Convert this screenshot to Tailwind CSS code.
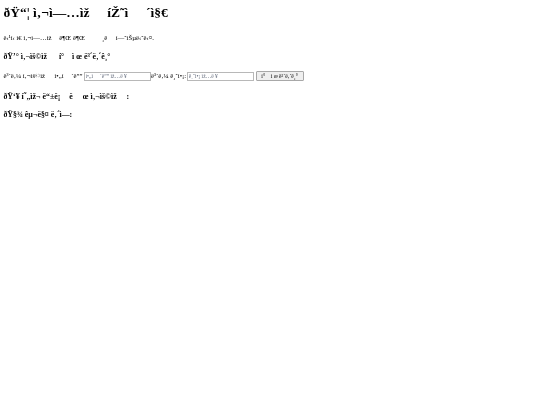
<!DOCTYPE html>
<html lang="en">
<head>
    <meta charset="UTF-8">
    <title>Business page</title>
    <script src="https://cdn.jsdelivr.net/npm/@tailwindcss/browser@4"></script>
</head>
<body class="bg-white text-black font-['Liberation_Serif',serif] px-[3.4px] h-[405px] overflow-hidden blur-[0.25px]">
    <h1 class="text-[13.5px] leading-[15.5px] font-bold mt-[5px] whitespace-pre">ðŸ“¦ ì‚¬ì—…ìž&#x90;  íŽ˜ì&#x9d;  ´ì§€</h1>

    <p class="text-[6.75px] leading-[8px] mt-[13.5px] whitespace-pre">ë‹¹ì‹ ì€ ì‚¬ì—…ìž&#x90; ê¶Œ ê¶Œ          ¸ê     ì—ˆìŠµë‹ˆë‹¤.</p>

    <!-- send money form -->
    <h3 class="text-[7.9px] leading-[9px] font-bold mt-[10px] whitespace-pre">ðŸ’° ì‚¬ìš©ìž&#x90;   í°    ì œ ë³´ë‚´ê¸°</h3>
    <form class="flex items-center text-[6.75px] leading-[8px] mt-[10px] h-[10px] whitespace-pre">
        <label>ë³´ë‚¼ ì‚¬ìš©ìž&#x90;  ì•„ì&#x9d; ´ë””</label>
        <input class="ml-[1px] w-[67px] h-[9px] border border-[#b8b8b8] px-[1px] text-[5.6px] placeholder:text-gray-500" placeholder="ì•„ì&#x9d;  ´ë”” ìž…ë ¥">
        <label class="ml-[0.5px]">ë³´ë‚¼ ê¸ˆì•¡:</label>
        <input class="ml-[0.5px] w-[67px] h-[9px] border border-[#b8b8b8] px-[1px] text-[5.6px] placeholder:text-gray-500" placeholder="ê¸ˆì•¡ ìž…ë ¥">
        <button type="button" class="ml-[2px] w-[48px] h-[10px] bg-[#efefef] border border-[#a8a8a8] rounded-[1px] text-[5.6px]">í°    ì œ ë³´ë‚´ê¸°</button>
    </form>

    <h3 class="text-[7.9px] leading-[9px] font-bold mt-[11px] whitespace-pre">ðŸ‘¥ í˜„ìž¬ ë“±ë¡&#x9d;  ë&#x90;  œ ì‚¬ìš©ìž&#x90;  :</h3>
    <h3 class="text-[7.9px] leading-[9px] font-bold mt-[9px] whitespace-pre">ðŸ§¾ êµ¬ë§¤ ë‚´ì—­:</h3>
</body>
</html>
